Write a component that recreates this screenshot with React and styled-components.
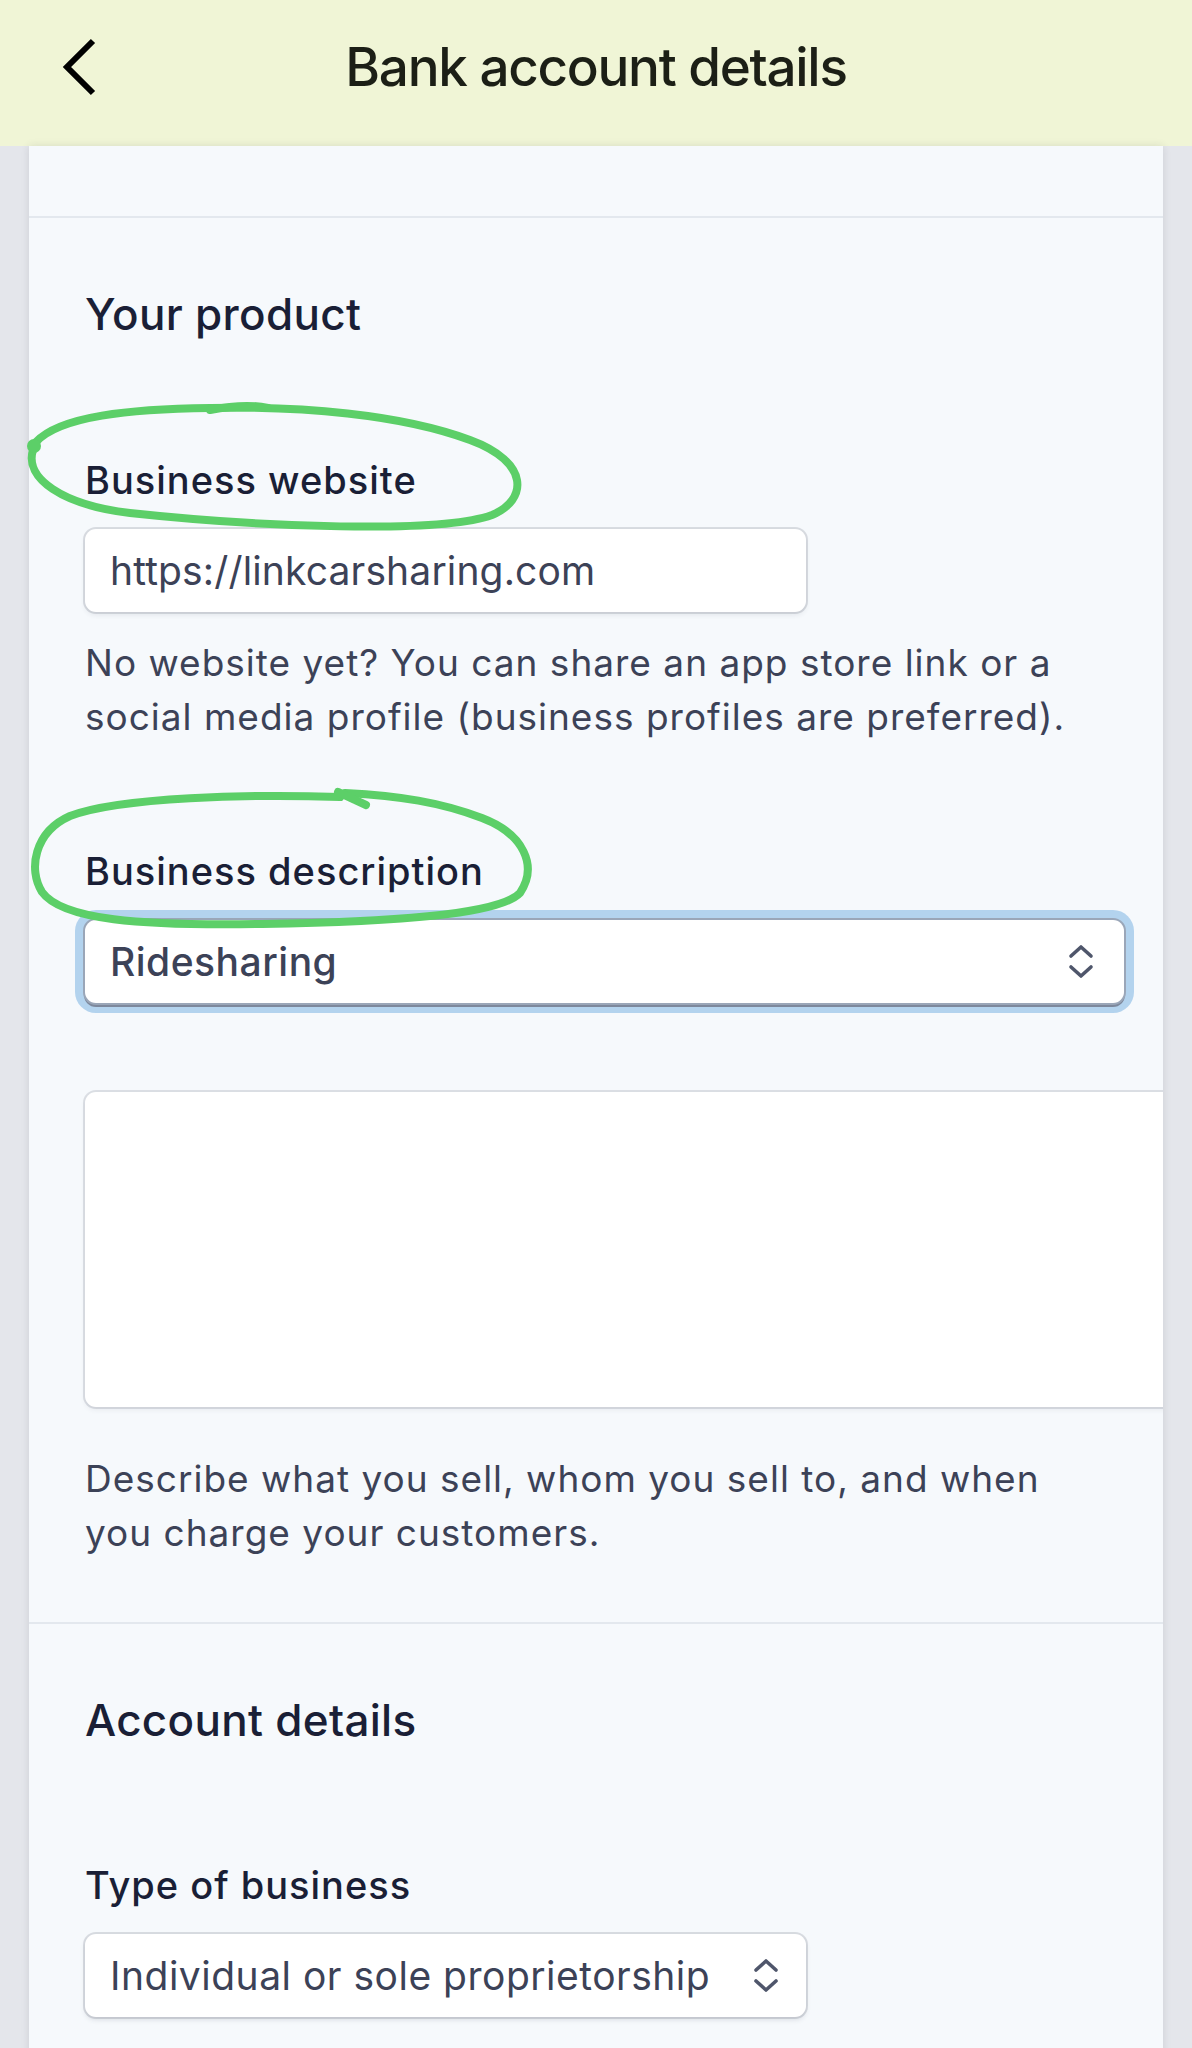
import React from "react";
import styled, { createGlobalStyle } from "styled-components";

const GlobalStyle = createGlobalStyle`
  html, body {
    margin: 0;
    padding: 0;
  }
  body {
    background: #e4e6eb;
    font-family: Inter, "Noto Sans", sans-serif;
    -webkit-font-smoothing: antialiased;
  }
  * {
    box-sizing: border-box;
  }
`;

const Page = styled.div`
  position: relative;
  width: 1192px;
  height: 2048px;
  overflow: hidden;
  background: #e4e6eb;
`;

const Header = styled.header`
  height: 146px;
  background: #f0f5d6;
  display: grid;
  grid-template-columns: 160px 1fr 160px;
  align-items: center;
  padding-bottom: 12px;
`;

const BackButton = styled.button`
  display: flex;
  align-items: center;
  padding: 0 0 0 61px;
  border: 0;
  background: none;
  cursor: pointer;
`;

const Title = styled.h1`
  margin: 0;
  text-align: center;
  font-size: 53px;
  line-height: 55px;
  font-weight: 500;
  letter-spacing: -1.3px;
  color: #1c1f16;
`;

const Body = styled.main`
  padding: 0 29px;
`;

const Card = styled.div`
  background: #f6f9fc;
  box-shadow: 0 0 8px rgba(40, 45, 60, 0.12);
  overflow: hidden;
  min-height: 1902px;
`;

const TopGap = styled.div`
  height: 70px;
`;

const Divider = styled.hr`
  margin: 0;
  border: 0;
  height: 2px;
  background: #e3e8ee;
`;

const Section = styled.section`
  padding: 70px 39px 62px 56px;
`;

const SectionTitle = styled.h2`
  margin: 0;
  font-size: 44px;
  line-height: 52px;
  font-weight: 500;
  letter-spacing: 0.3px;
  color: #1a1f36;
`;

const Field = styled.div`
  margin-top: ${(p) => p.$gap}px;
`;

const Label = styled.label`
  display: block;
  margin-bottom: 27px;
  font-size: 38px;
  line-height: 44px;
  font-weight: 500;
  letter-spacing: 1px;
  color: #1a1f36;
`;

const TextInput = styled.input`
  display: block;
  width: 721px;
  height: 83px;
  padding: 0 25px;
  border: 0;
  border-radius: 11px;
  background: #fff;
  box-shadow: 0 0 0 2px rgba(60, 66, 87, 0.16), 0 3px 5px rgba(60, 66, 87, 0.1);
  font-family: Inter, "Noto Sans", sans-serif;
  font-size: 39px;
  letter-spacing: 0.15px;
  color: #3c4257;
  outline: none;
`;

const SelectBox = styled.div`
  display: flex;
  align-items: center;
  justify-content: space-between;
  width: ${(p) => (p.$wide ? "100%" : "721px")};
  height: 83px;
  padding: 0 ${(p) => (p.$wide ? 30 : 27)}px 0 25px;
  border-radius: 11px;
  background: #fff;
  font-size: 39px;
  letter-spacing: 0.5px;
  font-weight: ${(p) => (p.$focused ? 500 : 400)};
  color: #3c4257;
  box-shadow: ${(p) =>
    p.$focused
      ? "0 0 0 2px #9aa6b8, 0 3px 0 1px #7d889c, 0 0 0 10px #b3d3ee"
      : "0 0 0 2px rgba(60, 66, 87, 0.16), 0 3px 5px rgba(60, 66, 87, 0.14)"};
`;

const TextArea = styled.textarea`
  display: block;
  width: calc(100% + 120px);
  height: 315px;
  border: 0;
  border-radius: 11px;
  background: #fff;
  box-shadow: 0 0 0 2px rgba(60, 66, 87, 0.14), 0 3px 5px rgba(60, 66, 87, 0.08);
  resize: none;
  outline: none;
`;

const Help = styled.p`
  max-width: 1000px;
  margin: ${(p) => p.$gap}px 0 0;
  font-size: 37px;
  line-height: 54px;
  letter-spacing: 1px;
  color: #3c4257;
`;

const Marks = styled.svg`
  position: absolute;
  top: 0;
  left: 0;
  pointer-events: none;
`;

function Chevron() {
  return (
    <svg width="36" height="58" viewBox="0 0 36 58">
      <polyline points="32,3 6,29 32,55" fill="none" stroke="#000" strokeWidth="6" />
    </svg>
  );
}

function UpDown() {
  return (
    <svg width="26" height="36" viewBox="0 0 26 36">
      <polyline points="3,12 13,3 23,12" fill="none" stroke="#4f566b" strokeWidth="3.6" strokeLinecap="round" strokeLinejoin="round" />
      <polyline points="3,23 13,32 23,23" fill="none" stroke="#4f566b" strokeWidth="3.6" strokeLinecap="round" strokeLinejoin="round" />
    </svg>
  );
}

export default function App() {
  return (
    <Page>
      <GlobalStyle />
      <Header>
        <BackButton aria-label="Back">
          <Chevron />
        </BackButton>
        <Title>Bank account details</Title>
        <div />
      </Header>

      <Body>
        <Card>
          <TopGap />
          <Divider />

          <Section>
            <SectionTitle>Your product</SectionTitle>

            <Field $gap={118}>
              <Label>Business website</Label>
              <TextInput readOnly value="https://linkcarsharing.com" />
              <Help $gap={24}>
                No website yet? You can share an app store link or a social media profile (business profiles are preferred).
              </Help>
            </Field>

            <Field $gap={105}>
              <Label>Business description</Label>
              <SelectBox $wide $focused>
                <span>Ridesharing</span>
                <UpDown />
              </SelectBox>
            </Field>

            <Field $gap={89}>
              <TextArea />
              <Help $gap={45}>
                Describe what you sell, whom you sell to, and when you charge your customers.
              </Help>
            </Field>
          </Section>

          <Divider />

          <Section>
            <SectionTitle>Account details</SectionTitle>
            <Field $gap={117}>
              <Label>Type of business</Label>
              <SelectBox>
                <span>Individual or sole proprietorship</span>
                <UpDown />
              </SelectBox>
            </Field>
          </Section>
        </Card>
      </Body>

      <Marks width="1192" height="2048" viewBox="0 0 1192 2048">
        <g fill="none" stroke="#5ccf68" strokeWidth="8" strokeLinecap="round" strokeLinejoin="round">
          <path d="M 36 442 C 60 416, 130 409, 210 408 C 300 406, 400 414, 470 440 C 530 462, 528 500, 492 515 C 440 534, 260 527, 130 513 C 62 505, 24 478, 33 450" />
          <path d="M 210 410 C 230 406, 250 404, 268 408" />
          <path d="M 340 797 C 250 794, 120 797, 70 816 C 34 832, 28 870, 42 892 C 62 920, 140 926, 262 924 C 400 922, 500 914, 520 893 C 538 866, 524 834, 482 818 C 440 802, 400 796, 345 793" />
          <path d="M 338 792 L 366 805" />
        </g>
        <circle cx="34" cy="446" r="7" fill="#5ccf68" />
      </Marks>
    </Page>
  );
}
